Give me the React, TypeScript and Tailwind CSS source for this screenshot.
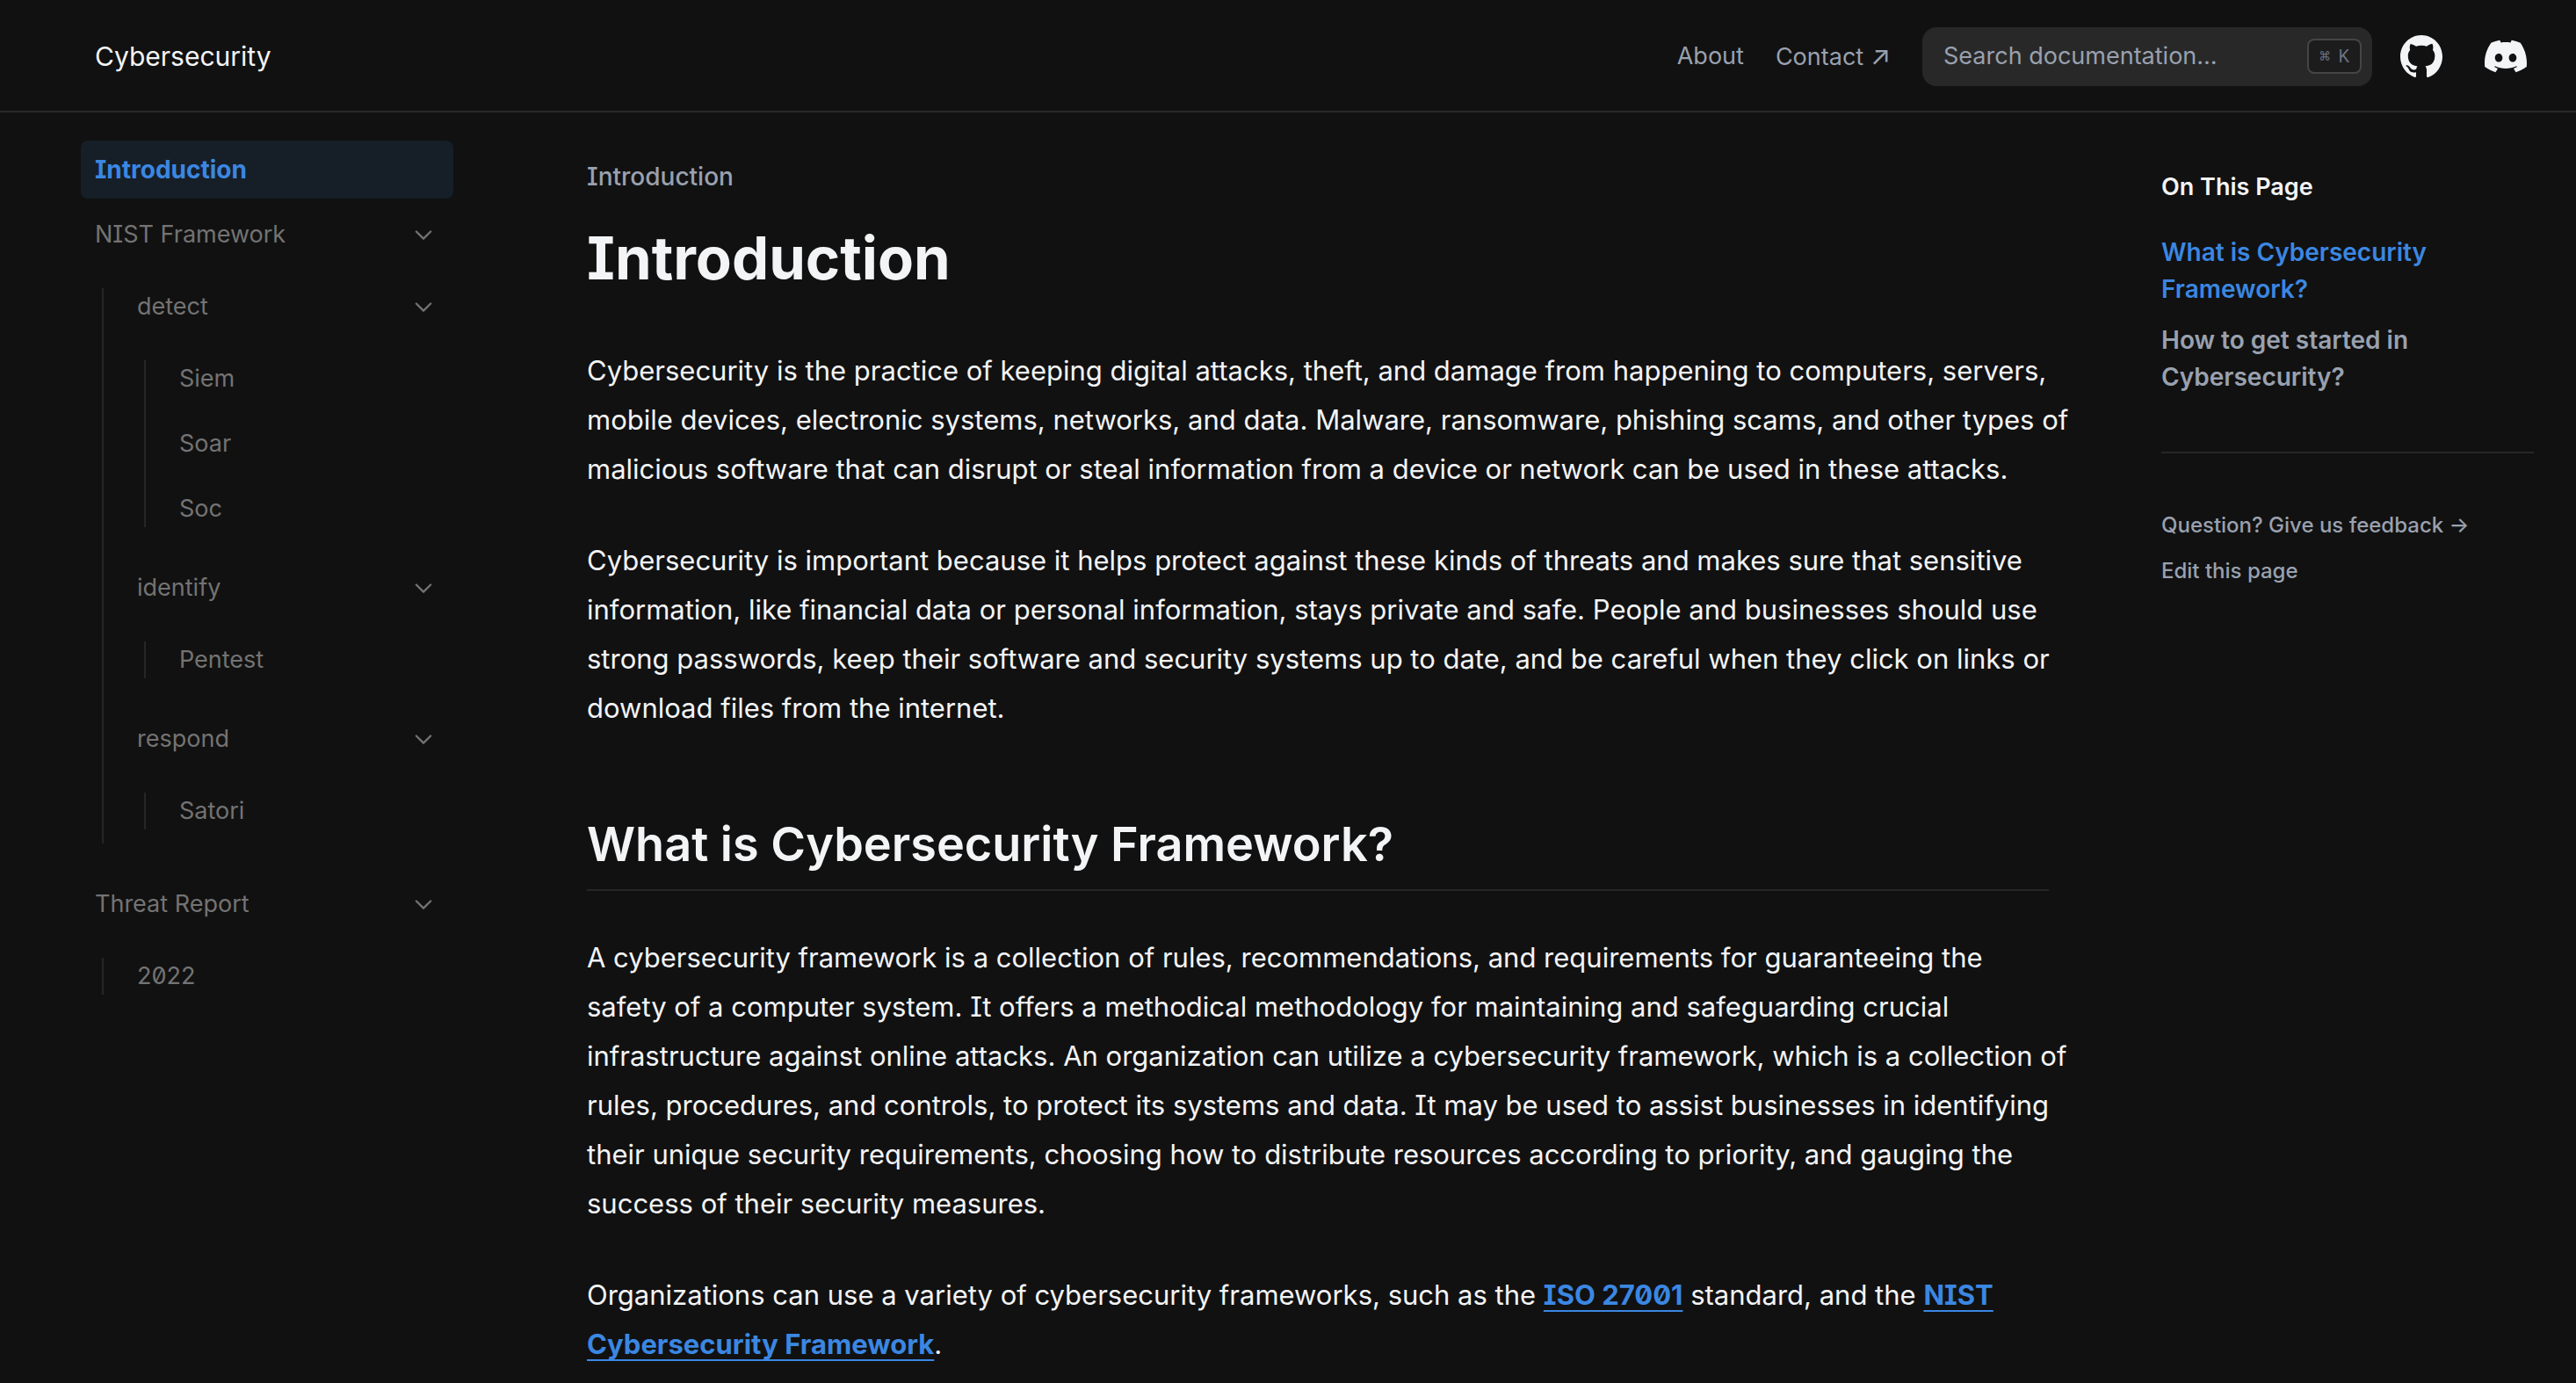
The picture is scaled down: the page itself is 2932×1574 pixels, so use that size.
import type { ReactNode } from "react";

function ChevronDown() {
  return (
    <span className="flex size-9 shrink-0 p-1">
      <svg viewBox="0 0 24 24" fill="none" stroke="currentColor" strokeWidth={2} strokeLinecap="round" strokeLinejoin="round" className="size-7 rotate-90" aria-hidden="true">
        <path d="M9 5l7 7-7 7" />
      </svg>
    </span>
  );
}

function GitHubIcon() {
  return (
    <svg viewBox="3 3 18 18" fill="currentColor" className="size-12" aria-hidden="true">
      <path d="M12 3C7.0275 3 3 7.12937 3 12.2276C3 16.3109 5.57625 19.7597 9.15374 20.9824C9.60374 21.0631 9.77249 20.7863 9.77249 20.5441C9.77249 20.3249 9.76125 19.5982 9.76125 18.8254C7.5 19.2522 6.915 18.2602 6.735 17.7412C6.63375 17.4759 6.19499 16.6569 5.8125 16.4378C5.4975 16.2647 5.0475 15.838 5.80124 15.8264C6.51 15.8149 7.01625 16.4954 7.18499 16.7723C7.99499 18.1679 9.28875 17.7758 9.80625 17.5335C9.885 16.9337 10.1212 16.53 10.38 16.2993C8.3775 16.0687 6.285 15.2728 6.285 11.7432C6.285 10.7397 6.63375 9.9092 7.20749 9.26326C7.1175 9.03257 6.8025 8.08674 7.2975 6.81794C7.2975 6.81794 8.05125 6.57571 9.77249 7.76377C10.4925 7.55615 11.2575 7.45234 12.0225 7.45234C12.7875 7.45234 13.5525 7.55615 14.2725 7.76377C15.9937 6.56418 16.7475 6.81794 16.7475 6.81794C17.2424 8.08674 16.9275 9.03257 16.8375 9.26326C17.4113 9.9092 17.76 10.7281 17.76 11.7432C17.76 15.2843 15.6563 16.0687 13.6537 16.2993C13.98 16.5877 14.2613 17.1414 14.2613 18.0065C14.2613 19.2407 14.25 20.2326 14.25 20.5441C14.25 20.7863 14.4188 21.0746 14.8688 20.9824C16.6554 20.364 18.2079 19.1866 19.3078 17.6162C20.4077 16.0457 20.9995 14.1611 21 12.2276C21 7.12937 16.9725 3 12 3Z" />
    </svg>
  );
}

function DiscordIcon() {
  return (
    <svg viewBox="0 5 30.67 23.25" fill="currentColor" className="size-12" aria-hidden="true">
      <path d="M26.0015 6.9529C24.0021 6.03845 21.8787 5.37198 19.6623 5C19.3833 5.48048 19.0733 6.13144 18.8563 6.64292C16.4989 6.30193 14.1585 6.30193 11.8336 6.64292C11.6166 6.13144 11.2911 5.48048 11.0276 5C8.79575 5.37198 6.67235 6.03845 4.6869 6.9529C0.672601 12.8736 -0.41235 18.6548 0.130124 24.3585C2.79599 26.2959 5.36889 27.4739 7.89682 28.2489C8.51679 27.4119 9.07477 26.5129 9.55525 25.5675C8.64079 25.2265 7.77283 24.808 6.93587 24.312C7.15286 24.1571 7.36986 23.9866 7.57135 23.8161C12.6241 26.1255 18.0969 26.1255 23.0876 23.8161C23.3046 23.9866 23.5061 24.1571 23.7231 24.312C22.8861 24.808 22.0182 25.2265 21.1037 25.5675C21.5842 26.5129 22.1422 27.4119 22.7621 28.2489C25.2885 27.4739 27.8769 26.2959 30.5288 24.3585C31.1952 17.7559 29.4733 12.0212 26.0015 6.9529ZM10.2527 20.8402C8.73376 20.8402 7.49382 19.4608 7.49382 17.7714C7.49382 16.082 8.70276 14.7025 10.2527 14.7025C11.7871 14.7025 13.0425 16.082 13.0115 17.7714C13.0115 19.4608 11.7871 20.8402 10.2527 20.8402ZM20.4373 20.8402C18.9183 20.8402 17.6768 19.4608 17.6768 17.7714C17.6768 16.082 18.8873 14.7025 20.4373 14.7025C21.9717 14.7025 23.2271 16.082 23.1961 17.7714C23.1961 19.4608 21.9872 20.8402 20.4373 20.8402Z" />
    </svg>
  );
}

function Header() {
  return (
    <header className="border-b-2 border-[#292929]">
      <div className="mx-auto flex h-[126px] max-w-[2880px] items-center pt-0.5 pr-[30px] pl-[82px]">
        <a href="#home" className="mr-auto text-[30px] leading-12 text-gray-100">Cybersecurity</a>
        <nav className="mr-9 flex items-center gap-9 text-[27px] leading-10 text-gray-400" aria-label="Main">
          <a href="#about">About</a>
          <a href="#contact">Contact <span className="text-[30px]">↗</span></a>
        </nav>
        <form role="search" className="mr-8 flex h-[67px] w-[512px] items-center rounded-2xl bg-[#282828] pr-3 pl-6">
          <input type="search" aria-label="Search documentation" placeholder="Search documentation…" className="min-w-0 flex-1 bg-transparent text-[27px] leading-9 text-gray-100 outline-none placeholder:text-gray-400" />
          <kbd className="flex h-10 w-[62px] items-center justify-between rounded-lg border-2 border-[#454545] bg-[#1c1c1c] px-3 font-['DejaVu_Sans_Mono',monospace] text-[20px] leading-none text-gray-500">
            <span>⌘</span>
            <span className="font-['Roboto','Inter',sans-serif]">K</span>
          </kbd>
        </form>
        <div className="flex items-center gap-12 text-gray-100">
          <a href="#github" aria-label="GitHub"><GitHubIcon /></a>
          <a href="#discord" aria-label="Discord"><DiscordIcon /></a>
        </div>
      </div>
    </header>
  );
}

type Entry = { title: string; children?: Entry[] };

const menu: Entry[] = [
  {
    title: "NIST Framework",
    children: [
      { title: "detect", children: [{ title: "Siem" }, { title: "Soar" }, { title: "Soc" }] },
      { title: "identify", children: [{ title: "Pentest" }] },
      { title: "respond", children: [{ title: "Satori" }] },
    ],
  },
  { title: "Threat Report", children: [{ title: "2022" }] },
];

function MenuItem({ entry }: { entry: Entry }) {
  if (!entry.children) {
    return (
      <li>
        <a href={"#" + entry.title.toLowerCase()} className="block px-4 py-3">{entry.title}</a>
      </li>
    );
  }
  return (
    <li>
      <button type="button" aria-expanded="true" className="flex w-full items-center justify-between px-4 py-3 text-left">
        {entry.title}
        <ChevronDown />
      </button>
      <div className="py-4 pl-6">
        <ul className="relative flex flex-col gap-2 pl-6 before:absolute before:inset-y-3 before:left-0 before:w-0.5 before:bg-[#262626]">
          {entry.children.map((child) => (
            <MenuItem key={child.title} entry={child} />
          ))}
        </ul>
      </div>
    </li>
  );
}

function Sidebar() {
  return (
    <aside className="w-[512px] shrink-0 pt-8 pr-[22px] pl-[66px]">
      <nav aria-label="Documentation">
        <ul className="flex flex-col gap-2 text-[27px] leading-[42px] text-neutral-500">
          <li>
            <a href="#introduction" aria-current="page" className="block rounded-lg bg-[#161f28] px-4 py-3 text-[28px] font-bold text-[#3b87e2]">Introduction</a>
          </li>
          {menu.map((entry) => (
            <MenuItem key={entry.title} entry={entry} />
          ))}
        </ul>
      </nav>
    </aside>
  );
}

function TableOfContents() {
  return (
    <aside className="w-[512px] shrink-0 pt-16 pr-[22px] pl-[66px]">
      <nav aria-label="On this page" className="text-[28px] leading-[42px] font-semibold">
        <p className="mb-8 text-[27px] text-gray-100">On This Page</p>
        <ul className="flex flex-col gap-4 text-gray-400">
          <li><a href="#what-is" className="block text-[#3b87e2]">What is Cybersecurity Framework?</a></li>
          <li><a href="#how-to" className="block">How to get started in Cybersecurity?</a></li>
        </ul>
      </nav>
      <div className="mt-16 flex flex-col gap-4 border-t-2 border-[#262626] pt-16 text-2xl leading-9 font-medium text-gray-400">
        <a href="#feedback">Question? Give us feedback →</a>
        <a href="#edit">Edit this page</a>
      </div>
    </aside>
  );
}

function Paragraph({ children }: { children: ReactNode }) {
  return <p className="mt-12 -mr-6">{children}</p>;
}

function TextLink({ href, children }: { href: string; children: ReactNode }) {
  return <a href={href} className="font-bold text-[#3b87e2] underline decoration-2 underline-offset-[6px]">{children}</a>;
}

export default function App() {
  return (
    <div className="min-h-screen bg-[#111111] font-['Inter',sans-serif] text-gray-100 antialiased [font-feature-settings:'cv08','zero']">
      <Header />
      <div className="mx-auto flex max-w-[2880px]">
        <Sidebar />
        <main className="min-w-0 flex-1 pt-[52px] pr-[62px] pl-[130px] text-[31px] leading-14">
          <div className="text-[28px] leading-[42px] font-medium text-gray-400">Introduction</div>
          <h1 className="mt-4 -mb-1 text-[67px] leading-[112px] font-bold">Introduction</h1>
          <Paragraph>Cybersecurity is the practice of keeping digital attacks, theft, and damage from happening to computers, servers, mobile devices, electronic systems, networks, and data. Malware, ransomware, phishing scams, and other types of malicious software that can disrupt or steal information from a device or network can be used in these attacks.</Paragraph>
          <Paragraph>Cybersecurity is important because it helps protect against these kinds of threats and makes sure that sensitive information, like financial data or personal information, stays private and safe. People and businesses should use strong passwords, keep their software and security systems up to date, and be careful when they click on links or download files from the internet.</Paragraph>
          <h2 id="what-is" className="mt-20 border-b-2 border-[#262626] pb-1 text-[54px] leading-[94px] font-semibold">What is Cybersecurity Framework?</h2>
          <Paragraph>A cybersecurity framework is a collection of rules, recommendations, and requirements for guaranteeing the <br />safety of a computer system. It offers a methodical methodology for maintaining and safeguarding crucial infrastructure against online attacks. An organization can utilize a cybersecurity framework, which is a collection of rules, procedures, and controls, to protect its systems and data. It may be used to assist businesses in identifying their unique security requirements, choosing how to distribute resources according to priority, and gauging the success of their security measures.</Paragraph>
          <Paragraph>Organizations can use a variety of cybersecurity frameworks, such as the <TextLink href="#iso">ISO 27001</TextLink> standard, and the <TextLink href="#nist">NIST Cybersecurity Framework</TextLink>.</Paragraph>
        </main>
        <TableOfContents />
      </div>
    </div>
  );
}
